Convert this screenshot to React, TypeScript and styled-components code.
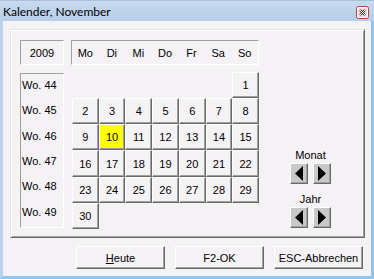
import styled, { createGlobalStyle, css } from "styled-components";

const GlobalStyle = createGlobalStyle`
  * { box-sizing: border-box; }
  body {
    margin: 0;
    font-family: "Liberation Sans", Arial, sans-serif;
    font-size: 11px;
    color: #000;
  }
`;

const weekdays = ["Mo", "Di", "Mi", "Do", "Fr", "Sa", "So"];
const weeks = [44, 45, 46, 47, 48, 49];
const days: (number | null)[] = [
  null, null, null, null, null, null,
  ...Array.from({ length: 30 }, (_, i) => i + 1),
];
const today = 10;

const raised = css`
  border-style: solid;
  border-width: 1px;
  border-color: #fff #696969 #696969 #fff;
  box-shadow: inset -1px -1px 0 #a0a0a0;
`;

const sunken = css`
  border-style: solid;
  border-width: 1px;
  border-color: #a0a0a0 #fff #fff #a0a0a0;
`;

const LeftArrow = () => (
  <svg width="8" height="15" viewBox="0 0 8 15">
    <polygon points="8,0 0,7.5 8,15" fill="#000" />
  </svg>
);

const RightArrow = () => (
  <svg width="8" height="15" viewBox="0 0 8 15">
    <polygon points="0,0 8,7.5 0,15" fill="#000" />
  </svg>
);

const App = () => {
  return (
    <>
      <GlobalStyle />
      <Window>
        <TitleBar>
          <Title>Kalender, November</Title>
          <CloseBox>
            <svg width="13" height="13" viewBox="0 0 13 13">
              <rect x="0.5" y="0.5" width="12" height="12" rx="2" fill="#f2dcda" stroke="#a8473f" />
              <rect x="1.5" y="1.5" width="10" height="10" rx="1" fill="none" stroke="#fff" strokeOpacity="0.7" />
              <path d="M4 4 L9 9 M9 4 L4 9" stroke="#3a3a3a" strokeWidth="2.2" />
              <path d="M4 4 L9 9 M9 4 L4 9" stroke="#fff" strokeWidth="0.9" />
            </svg>
          </CloseBox>
        </TitleBar>
        <Client>
          <Group>
            <YearBox>2009</YearBox>
            <HeaderBox>
              {weekdays.map((d) => (
                <span key={d}>{d}</span>
              ))}
            </HeaderBox>
            <WeekBox>
              {weeks.map((w) => (
                <WeekLabel key={w}>Wo. {w}</WeekLabel>
              ))}
            </WeekBox>
            <DayGrid>
              {days.map((d, i) =>
                d ? (
                  <DayButton key={i} $today={d === today}>
                    {d}
                  </DayButton>
                ) : (
                  <span key={i} />
                )
              )}
            </DayGrid>
            <NavPanel>
              <NavLabel>Monat</NavLabel>
              <ArrowRow $spaced>
                <ArrowButton>
                  <LeftArrow />
                </ArrowButton>
                <ArrowButton>
                  <RightArrow />
                </ArrowButton>
              </ArrowRow>
              <NavLabel>Jahr</NavLabel>
              <ArrowRow>
                <ArrowButton>
                  <LeftArrow />
                </ArrowButton>
                <ArrowButton>
                  <RightArrow />
                </ArrowButton>
              </ArrowRow>
            </NavPanel>
          </Group>
          <ButtonRow>
            <PushButton>
              <u>H</u>eute
            </PushButton>
            <PushButton>F2-OK</PushButton>
            <PushButton>ESC-Abbrechen</PushButton>
          </ButtonRow>
        </Client>
      </Window>
    </>
  );
};

export default App;

const Window = styled.div`
  width: 374px;
  height: 279px;
  display: flex;
  flex-direction: column;
  background: #f5f2f5;
`;

const TitleBar = styled.div`
  height: 21px;
  display: flex;
  align-items: center;
  justify-content: space-between;
  padding: 0 5px 0 3px;
  background: linear-gradient(#c8d9ee, #b6cee9);
  border-top: 1px solid #a9c1dd;
`;

const Title = styled.div`
  font-family: Lato, "Liberation Sans", sans-serif;
  font-size: 12px;
  color: #000;
  padding-top: 1px;
`;

const CloseBox = styled.div`
  width: 13px;
  height: 13px;
  display: flex;
  margin-top: 2px;
`;

const Client = styled.div`
  flex: 1;
  display: flex;
  flex-direction: column;
  padding: 8px 6px 7px 7px;
  border-left: 3px solid #bcd2ea;
  border-right: 3px solid #8fc5ee;
  border-bottom: 3px solid #8fc5ee;
`;

const Group = styled.div`
  height: 209px;
  display: grid;
  grid-template-columns: 44px 188px 1fr;
  grid-template-rows: 25px 157px;
  gap: 7px;
  padding: 10px 9px 0 9px;
  border-style: solid;
  border-width: 1px;
  border-color: #e3e3e3 #696969 #696969 #e3e3e3;
  box-shadow: inset 1px 1px 0 #fff, inset -1px -1px 0 #a0a0a0;
`;

const YearBox = styled.div`
  ${sunken};
  grid-column: 1;
  grid-row: 1;
  display: flex;
  align-items: center;
  justify-content: center;
`;

const HeaderBox = styled.div`
  ${sunken};
  grid-column: 2;
  grid-row: 1;
  display: grid;
  grid-template-columns: repeat(7, 1fr);
  align-items: center;
  justify-items: center;
`;

const WeekBox = styled.div`
  ${sunken};
  grid-column: 1;
  grid-row: 2;
  display: grid;
  grid-template-rows: repeat(6, 1fr);
  align-items: center;
  padding: 0 0 1px 1px;
  margin-top: 1px;
  height: 155px;
`;

const WeekLabel = styled.div`
  margin-top: -3px;
`;

const DayGrid = styled.div`
  grid-column: 2;
  grid-row: 2;
  margin-left: 1px;
  display: grid;
  grid-template-columns: repeat(7, 1fr);
  grid-template-rows: repeat(6, 1fr);
`;

const DayButton = styled.div<{ $today?: boolean }>`
  ${raised};
  display: flex;
  align-items: center;
  justify-content: center;
  background: ${(p) => (p.$today ? "#ffff00" : "#f5f2f5")};
`;

const NavPanel = styled.div`
  grid-column: 3;
  grid-row: 2;
  display: flex;
  flex-direction: column;
  align-items: center;
  justify-content: flex-end;
  padding-bottom: 1px;
`;

const NavLabel = styled.div`
  line-height: 13px;
  margin-bottom: 1px;
`;

const ArrowRow = styled.div<{ $spaced?: boolean }>`
  display: flex;
  gap: 5px;
  margin-bottom: ${(p) => (p.$spaced ? "9px" : "0")};
`;

const ArrowButton = styled.div`
  ${raised};
  width: 18px;
  height: 21px;
  display: flex;
  align-items: center;
  justify-content: center;
  background: #c8c8c8;
`;

const ButtonRow = styled.div`
  display: flex;
  justify-content: flex-end;
  gap: 10px;
  margin-top: 8px;
  margin-right: 2px;
`;

const PushButton = styled.div`
  ${raised};
  width: 89px;
  height: 23px;
  display: flex;
  align-items: center;
  justify-content: center;
  background: #f5f2f5;

  u {
    text-decoration: underline;
  }
`;
